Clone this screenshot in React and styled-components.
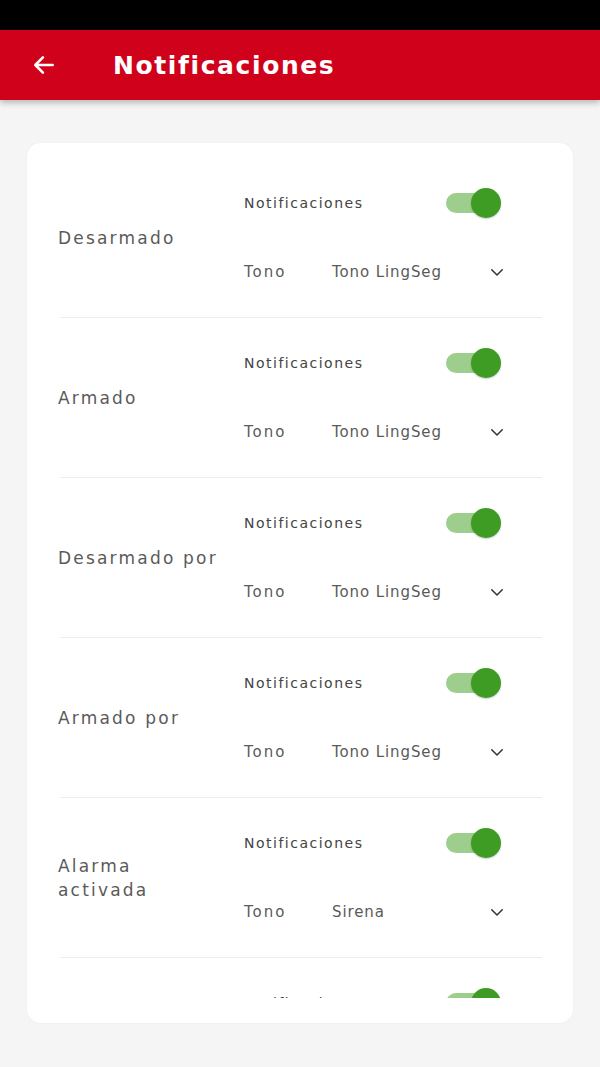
import React from 'react';
import styled, { createGlobalStyle } from 'styled-components';

const GlobalStyle = createGlobalStyle`
    html, body {
        margin: 0;
        padding: 0;
        background: #f5f5f5;
        font-family: 'DejaVu Sans', 'Noto Sans', sans-serif;
    }
`;

const events = [
    { name: 'Desarmado', tone: 'Tono LingSeg' },
    { name: 'Armado', tone: 'Tono LingSeg' },
    { name: 'Desarmado por', tone: 'Tono LingSeg' },
    { name: 'Armado por', tone: 'Tono LingSeg' },
    { name: 'Alarma activada', tone: 'Sirena' },
    { name: 'Intrusión', tone: 'Sirena' }
];

function BackArrow() {
    return (
        <svg width="26" height="26" viewBox="0 0 24 24" fill="none" stroke="#fff" strokeWidth="2.4" strokeLinecap="round" strokeLinejoin="round">
            <path d="M20 12H5" />
            <path d="M11 5l-7 7 7 7" />
        </svg>
    );
}

function Chevron() {
    return (
        <svg width="18" height="18" viewBox="0 0 24 24" fill="none" stroke="#333" strokeWidth="2" strokeLinecap="round" strokeLinejoin="round">
            <path d="M5 9l7 7 7-7" />
        </svg>
    );
}

function App() {
    return (
        <Page>
            <GlobalStyle />
            <StatusBar />
            <Header>
                <BackArrow />
                <Title>Notificaciones</Title>
            </Header>
            <Body>
                <Card>
                    <List>
                        {events.map((e, i) => (
                            <Row key={i}>
                                <Label>{e.name}</Label>
                                <Controls>
                                    <Line>
                                        <Small>Notificaciones</Small>
                                        <Toggle>
                                            <Thumb />
                                        </Toggle>
                                    </Line>
                                    <Line>
                                        <ToneLabel>Tono</ToneLabel>
                                        <ToneValue>{e.tone}</ToneValue>
                                        <Chevron />
                                    </Line>
                                </Controls>
                            </Row>
                        ))}
                    </List>
                </Card>
            </Body>
        </Page>
    );
}

export default App;

const Page = styled.div`
    width: 600px;
    height: 1067px;
    overflow: hidden;
    background: #f5f5f5;
`;

const StatusBar = styled.div`
    height: 30px;
    background: #000;
`;

const Header = styled.div`
    height: 70px;
    background: #d0021b;
    display: flex;
    align-items: center;
    padding-left: 31px;
    gap: 56px;
    box-shadow: 0 3px 6px rgba(0, 0, 0, 0.25);
    position: relative;
    z-index: 1;
`;

const Title = styled.div`
    color: #fff;
    font-size: 25px;
    font-weight: 700;
    letter-spacing: 1.6px;
`;

const Body = styled.div`
    padding: 43px 27px 0;
`;

const Card = styled.div`
    background: #fff;
    border-radius: 14px;
    padding: 15px 0 25px;
    box-shadow: 0 0 3px rgba(0, 0, 0, 0.04);
`;

const List = styled.div`
    height: 840px;
    overflow: hidden;
`;

const Row = styled.div`
    height: 160px;
    box-sizing: border-box;
    margin: 0 31px 0 33px;
    border-bottom: 1px solid #ececec;
    display: grid;
    grid-template-columns: 184px 1fr;
    align-items: center;
`;

const Label = styled.div`
    font-size: 17px;
    color: #5a5a5a;
    letter-spacing: 2.2px;
    line-height: 24px;
    margin-left: -2px;
    max-width: 166px;
`;

const Controls = styled.div`
    display: flex;
    flex-direction: column;
    height: 100%;
    padding-top: 28px;
    box-sizing: border-box;
    gap: 35px;
    padding-right: 36px;
`;

const Line = styled.div`
    display: flex;
    align-items: center;
    height: 34px;
`;

const Small = styled.div`
    font-size: 14px;
    color: #444;
    letter-spacing: 1.5px;
    flex: 1;
`;

const Toggle = styled.div`
    position: relative;
    width: 54px;
    height: 20px;
    border-radius: 10px;
    background: #9dce8d;
    margin-right: 6px;
`;

const Thumb = styled.div`
    position: absolute;
    right: -1px;
    top: -5px;
    width: 30px;
    height: 30px;
    border-radius: 50%;
    background: #3e9b24;
    box-shadow: 0 1px 2px rgba(0, 0, 0, 0.2);
`;

const ToneLabel = styled.div`
    font-size: 15px;
    color: #5a5a5a;
    letter-spacing: 2px;
    width: 88px;
`;

const ToneValue = styled.div`
    font-size: 15px;
    color: #5a5a5a;
    letter-spacing: 0.9px;
    flex: 1;
`;
